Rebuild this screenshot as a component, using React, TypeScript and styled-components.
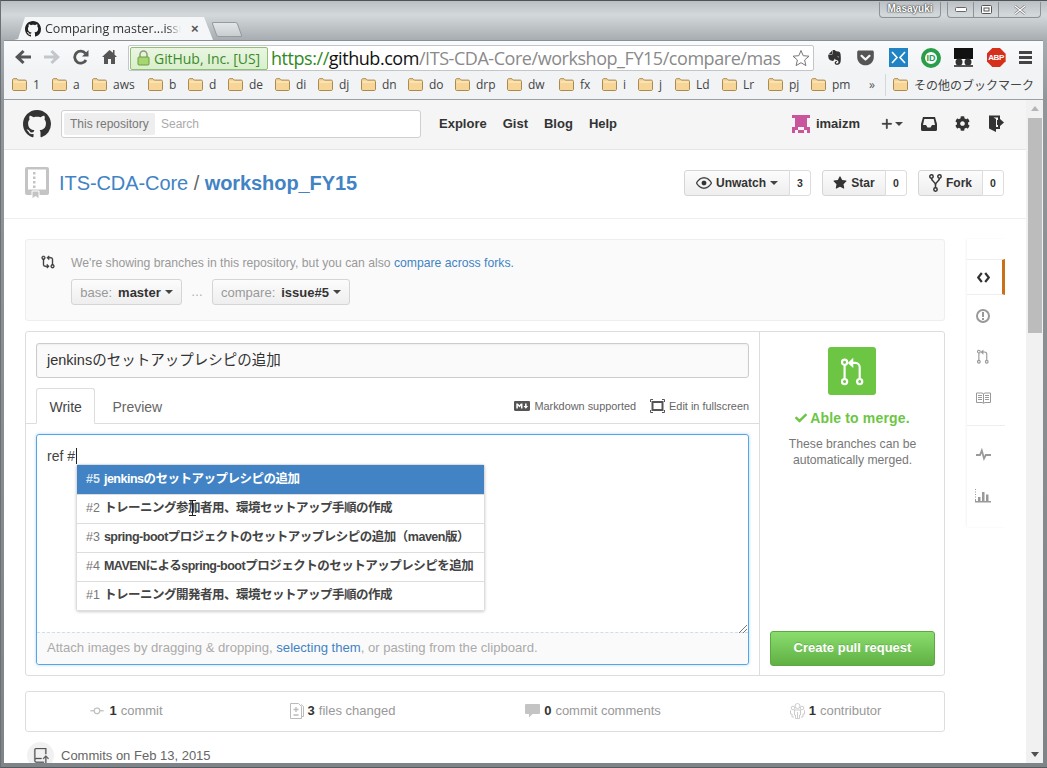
import React from "react";
import styled, { createGlobalStyle } from "styled-components";
import {
  GoEye,
  GoGitCommit,
  GoGitCompare,
  GoPlus,
  GoRepoPush,
  GoStarFill,
} from "react-icons/go";
import { FaCheck, FaCog, FaEvernote, FaGetPocket, FaMarkdown } from "react-icons/fa";

const UI = `"Open Sans", "Noto Sans CJK JP", sans-serif`;
const WEB = `"Liberation Sans", "Noto Sans CJK JP", sans-serif`;

const GlobalStyle = createGlobalStyle`
  html, body {
    margin: 0;
    padding: 0;
    width: 1047px;
    height: 768px;
    overflow: hidden;
    background: #4d5357;
  }
  * {
    box-sizing: border-box;
  }
`;

const Win = styled.div`
  width: 1047px;
  height: 768px;
  display: flex;
  flex-direction: column;
  padding: 0 4px 4px 3px;
  background: linear-gradient(#b9bfc3 0, #d3d8db 14px, #a6abaf 40px, #8f9599 100px, #7e8488 100%);
  border-top: 1px solid #4d5357;
  border-left: 1px solid #6a7074;
  border-bottom: 1px solid #555b60;
  font-family: ${WEB};
`;

const TitleBar = styled.div`
  height: 39px;
  flex: none;
  margin-left: 10px;
  display: flex;
  align-items: flex-start;
`;

const Tab = styled.div`
  width: 199px;
  height: 23px;
  margin-top: 16px;
  padding: 0 12px 0 11px;
  display: flex;
  align-items: center;
  gap: 4px;
  background: #f4f6f8;
  clip-path: polygon(0 100%, 4px 96%, 11px 0, 190px 0, 199px 100%);
  font: 12.5px ${UI};
  color: #333;
`;

const TabTitle = styled.span`
  width: 142px;
  flex: none;
  white-space: nowrap;
  -webkit-mask-image: linear-gradient(90deg, #000 122px, transparent 136px);
  mask-image: linear-gradient(90deg, #000 122px, transparent 136px);
`;

const TabClose = styled.span`
  font: bold 13px ${WEB};
  color: #555;
`;

const NewTab = styled.div`
  width: 26px;
  height: 15px;
  margin: 21px 0 0 1px;
  transform: skewX(20deg);
  border: 1px solid #969b9f;
  border-radius: 2px;
  background: linear-gradient(#e3e6e8, #c9cdd0);
`;

const TitleSpacer = styled.div`
  flex: 1;
`;

const UserBadge = styled.div`
  width: 62px;
  height: 16px;
  margin: 1px 6px 0 0;
  border: 1px solid #8d9296;
  border-top: none;
  border-radius: 0 0 4px 4px;
  text-align: center;
  font: bold 10px/14px ${WEB};
  color: #fff;
  text-shadow: 0 0 2px #222, 0 0 1px #222;
`;

const WinControls = styled.div`
  height: 16px;
  margin: 1px 2px 0 0;
  display: flex;
  border: 1px solid #8d9296;
  border-top: none;
  border-radius: 0 0 4px 4px;
  color: #fff;
`;

const WinButton = styled.div<{ $w: number }>`
  width: ${(p) => p.$w}px;
  display: flex;
  align-items: center;
  justify-content: center;
  & + & {
    border-left: 1px solid #8d9296;
  }
`;

const Toolbar = styled.div`
  height: 32px;
  flex: none;
  display: flex;
  align-items: center;
  background: linear-gradient(#f8fafb, #f1f3f5);
  border-top: 1px solid #8b9094;
  padding-left: 11px;
`;

const NavIcon = styled.span<{ $w: number }>`
  width: ${(p) => p.$w}px;
  flex: none;
  display: flex;
  align-items: center;
`;

const Omnibox = styled.div`
  width: 686px;
  height: 26px;
  flex: none;
  margin-top: 3px;
  padding: 0 3px 0 1px;
  display: flex;
  align-items: center;
  background: #fff;
  border: 1px solid #c3c6c9;
  border-radius: 2px;
`;

const SecureChip = styled.div`
  width: 138px;
  height: 23px;
  flex: none;
  display: flex;
  align-items: center;
  gap: 4px;
  padding-left: 6px;
  background: linear-gradient(#eaf6e2, #d9efcc);
  border: 1px solid #90bf75;
  border-radius: 2px;
  font: 14px ${UI};
  letter-spacing: -0.05px;
  color: #3c8a2e;
  white-space: nowrap;
`;

const Url = styled.div`
  flex: 1;
  padding-left: 3px;
  overflow: hidden;
  white-space: nowrap;
  font: 18px/24px ${UI};
  letter-spacing: -0.45px;
  color: #8a8a8a;
`;

const UrlScheme = styled.span`
  color: #2f8a22;
`;

const UrlHost = styled.span`
  color: #111;
`;

const Extensions = styled.div`
  flex: 1;
  display: flex;
  align-items: center;
  padding: 2px 11px 0 12px;
  justify-content: space-between;
`;

const Abp = styled.span`
  width: 19px;
  height: 19px;
  display: flex;
  align-items: center;
  justify-content: center;
  background: #d5301c;
  clip-path: polygon(30% 0, 70% 0, 100% 30%, 100% 70%, 70% 100%, 30% 100%, 0 70%, 0 30%);
  font: bold 8px ${WEB};
  letter-spacing: -0.3px;
  color: #fff;
`;

const IdBadge = styled.span`
  width: 20px;
  height: 20px;
  display: flex;
  align-items: center;
  justify-content: center;
  border-radius: 50%;
  background: #fff;
  border: 4px solid #2a9d4a;
  font: bold 9px ${WEB};
  color: #2a9d4a;
`;

const Bookmarks = styled.div`
  height: 28px;
  flex: none;
  display: flex;
  align-items: center;
  padding: 0 0 2px 8px;
  background: #f1f3f5;
  border-bottom: 1px solid #9a9fa3;
  font: 12px ${UI};
  color: #444;
`;

const Bookmark = styled.div<{ $w: number }>`
  width: ${(p) => p.$w}px;
  flex: none;
  display: flex;
  align-items: center;
  gap: 6px;
  white-space: nowrap;
`;

const Chevron = styled.span`
  width: 16px;
  margin-left: 11px;
  color: #555;
`;

const BarSep = styled.span`
  width: 1px;
  height: 22px;
  background: #d4d6d8;
  margin: 0 7px 0 0;
`;

const Page = styled.div`
  flex: 1;
  min-height: 0;
  display: flex;
  background: #fff;
`;

const Content = styled.div`
  width: 1022px;
  flex: none;
  overflow: hidden;
`;

const Scrollbar = styled.div`
  width: 17px;
  flex: none;
  padding-top: 18px;
  display: flex;
  flex-direction: column;
  align-items: center;
  position: relative;
  background: #f1f1f1;
`;

const ScrollThumb = styled.div`
  width: 14px;
  height: 215px;
  background: #bcbcbc;
`;

const Arrow = styled.span<{ $up?: boolean }>`
  position: absolute;
  left: 5px;
  width: 0;
  height: 0;
  border: 4px solid transparent;
  ${(p) =>
    p.$up
      ? "top: 6px; border-bottom: 5px solid #b5b5b5; border-top: none;"
      : "bottom: 6px; border-top: 5px solid #505050; border-bottom: none;"}
`;

const Header = styled.header`
  height: 50px;
  display: flex;
  align-items: center;
  padding: 0 22px 2px 19px;
  background: #f5f5f5;
  border-bottom: 1px solid #e5e5e5;
  color: #333;
`;

const Search = styled.div`
  width: 360px;
  height: 28px;
  margin: 0 18px 0 10px;
  padding: 2px;
  display: flex;
  align-items: stretch;
  background: #fff;
  border: 1px solid #cfcfcf;
  border-radius: 3px;
  font-size: 12px;
`;

const SearchScope = styled.span`
  width: 91px;
  padding-left: 6px;
  line-height: 22px;
  background: #eee;
  border-radius: 2px;
  color: #777;
`;

const SearchHint = styled.span`
  padding-left: 6px;
  line-height: 22px;
  color: #aaa;
`;

const NavLinks = styled.nav`
  flex: 1;
  display: flex;
  gap: 16px;
  font: bold 13px ${WEB};
  color: #333;
`;

const UserBox = styled.div`
  display: flex;
  align-items: center;
  font: bold 13px ${WEB};
`;

const HeaderIcon = styled.span<{ $left: number }>`
  display: flex;
  align-items: center;
  margin-left: ${(p) => p.$left}px;
`;

const RepoHead = styled.div`
  height: 69px;
  padding: 0 22px 2px 21px;
  display: flex;
  align-items: center;
  border-bottom: 1px solid #eee;
`;

const RepoTitle = styled.h1`
  flex: 1;
  margin: 0 0 0 10px;
  font: normal 20px ${WEB};
  letter-spacing: -0.07px;
  color: #4183c4;
`;

const Slash = styled.span`
  color: #666;
`;

const RepoName = styled.strong`
  font-weight: bold;
`;

const Actions = styled.div`
  display: flex;
  gap: 11px;
`;

const Action = styled.div`
  height: 26px;
  display: flex;
  font: bold 12px ${WEB};
  color: #333;
`;

const ActionButton = styled.div<{ $w: number }>`
  width: ${(p) => p.$w}px;
  display: flex;
  align-items: center;
  justify-content: center;
  gap: 4px;
  background: linear-gradient(#fcfcfc, #eee);
  border: 1px solid #d5d5d5;
  border-radius: 3px 0 0 3px;
`;

const Count = styled.div`
  width: 22px;
  margin-left: -1px;
  text-align: center;
  font-size: 10.5px;
  line-height: 24px;
  background: #fff;
  border: 1px solid #ddd;
  border-radius: 0 3px 3px 0;
`;

const Caret = styled.span`
  width: 0;
  height: 0;
  border: 4px solid transparent;
  border-top-color: #444;
  border-bottom: none;
`;

const Main = styled.div`
  padding: 20px 0 0 21px;
  display: flex;
  gap: 22px;
`;

const Column = styled.div`
  width: 920px;
  flex: none;
`;

const CompareBox = styled.div`
  height: 82px;
  padding: 15px 15px 0;
  display: flex;
  gap: 16px;
  background: #fafafa;
  border: 1px solid #eee;
  border-radius: 3px;
  color: #333;
`;

const CompareNote = styled.p`
  margin: 0 0 8px;
  font-size: 12.2px;
  line-height: 16px;
  color: #999;
`;

const Link = styled.span`
  color: #4183c4;
`;

const BranchRow = styled.div`
  display: flex;
  align-items: center;
`;

const BranchButton = styled.div<{ $w: number }>`
  width: ${(p) => p.$w}px;
  height: 26px;
  display: flex;
  align-items: center;
  justify-content: center;
  gap: 4px;
  background: linear-gradient(#fcfcfc, #eee);
  border: 1px solid #d5d5d5;
  border-radius: 3px;
  font: 13px ${WEB};
  color: #999;
`;

const BranchName = styled.b`
  margin-left: 2px;
  color: #333;
`;

const Dots = styled.span`
  width: 30px;
  text-align: center;
  font-size: 12px;
  color: #aaa;
`;

const FormBox = styled.div`
  height: 345px;
  margin-top: 10px;
  display: flex;
  border: 1px solid #ddd;
  border-radius: 3px;
`;

const Editor = styled.div`
  width: 734px;
  flex: none;
  padding-top: 11px;
  border-right: 1px solid #ddd;
`;

const TitleInput = styled.div`
  height: 35px;
  margin: 0 10px;
  padding-left: 10px;
  background: #fafafa;
  border: 1px solid #ccc;
  border-radius: 3px;
  box-shadow: inset 0 1px 2px rgba(0, 0, 0, 0.05);
  font-size: 14.5px;
  line-height: 33px;
  color: #333;
`;

const TabBar = styled.div`
  height: 36px;
  margin-top: 10px;
  padding: 0 10px;
  display: flex;
  align-items: flex-end;
  border-bottom: 1px solid #ddd;
  font-size: 14px;
`;

const EditorTab = styled.div<{ $active?: boolean }>`
  height: 36px;
  margin-bottom: -1px;
  padding: 0 ${(p) => (p.$active ? 12.5 : 16)}px;
  line-height: 37px;
  color: ${(p) => (p.$active ? "#444" : "#666")};
  background: ${(p) => (p.$active ? "#fff" : "transparent")};
  border: 1px solid ${(p) => (p.$active ? "#ddd" : "transparent")};
  border-bottom-color: ${(p) => (p.$active ? "#fff" : "transparent")};
  border-radius: 3px 3px 0 0;
`;

const TabTools = styled.div`
  flex: 1;
  height: 35px;
  display: flex;
  align-items: center;
  justify-content: flex-end;
  gap: 14px;
  font-size: 10.9px;
  color: #666;
`;

const ToolItem = styled.span`
  display: flex;
  align-items: center;
  gap: 4px;
  color: #666;
`;

const TextArea = styled.div`
  position: relative;
  height: 231px;
  margin: 10px 10px 0;
  display: flex;
  flex-direction: column;
  border: 1px solid #51a7e8;
  border-radius: 3px;
  box-shadow: 0 0 3px rgba(81, 167, 232, 0.5);
`;

const WriteArea = styled.div`
  flex: 1;
  padding: 12px 10px;
  font-size: 14px;
  line-height: 18px;
  color: #444;
`;

const Caretline = styled.span`
  display: inline-block;
  width: 1px;
  height: 16px;
  margin-left: 1px;
  vertical-align: -3px;
  background: #222;
`;

const Grip = styled.svg`
  position: absolute;
  right: 1px;
  top: 190px;
`;

const Suggester = styled.ul`
  position: absolute;
  left: 39px;
  top: 29px;
  width: 409px;
  margin: 0;
  padding: 0;
  list-style: none;
  background: #fff;
  border: 1px solid #ddd;
  border-radius: 3px;
  box-shadow: 0 1px 3px rgba(0, 0, 0, 0.2);
`;

const Suggestion = styled.li<{ $active?: boolean }>`
  height: 29px;
  padding: 0 9px 2px;
  display: flex;
  align-items: center;
  gap: 4px;
  white-space: nowrap;
  font: bold 12.5px/18px ${WEB};
  letter-spacing: -0.5px;
  color: ${(p) => (p.$active ? "#fff" : "#444")};
  background: ${(p) => (p.$active ? "#4183c4" : "#fff")};
  & + & {
    border-top: 1px solid #ddd;
  }
`;

const IssueNumber = styled.span<{ $active?: boolean }>`
  font-weight: ${(p) => (p.$active ? "bold" : "normal")};
  font-size: 12.5px;
  letter-spacing: 0;
  color: ${(p) => (p.$active ? "#d9e6f3" : "#777")};
`;

const IBeam = styled.svg`
  position: absolute;
  left: 151px;
  top: 65px;
`;

const DragBar = styled.div`
  height: 32px;
  flex: none;
  padding-left: 10px;
  background: #fafafa;
  border-top: 1px dashed #cfdfea;
  border-radius: 0 0 3px 3px;
  font-size: 13.1px;
  line-height: 29px;
  color: #aaa;
`;

const MergePanel = styled.div`
  flex: 1;
  padding: 15px 10px 9px;
  display: flex;
  flex-direction: column;
  align-items: center;
`;

const MergeBadge = styled.div`
  width: 48px;
  height: 48px;
  margin-right: 1px;
  display: flex;
  align-items: center;
  justify-content: center;
  background: #6cc644;
  border-radius: 3px;
  color: #fff;
`;

const MergeTitle = styled.div`
  margin-top: 14px;
  display: flex;
  align-items: center;
  gap: 3px;
  font: bold 14px/18px ${WEB};
  letter-spacing: 0.15px;
  color: #6cc644;
`;

const MergeNote = styled.p`
  flex: 1;
  margin: 9px 0 0;
  text-align: center;
  font-size: 12.2px;
  line-height: 16px;
  color: #777;
`;

const CreateButton = styled.div`
  width: 165px;
  height: 35px;
  text-align: center;
  font: bold 13px/31px ${WEB};
  color: #fff;
  text-shadow: 0 -1px 0 rgba(0, 0, 0, 0.15);
  background: linear-gradient(#8add6d, #60b044);
  border: 1px solid #5ca941;
  border-radius: 3px;
`;

const Stats = styled.div`
  height: 41px;
  margin-top: 15px;
  padding-bottom: 2px;
  display: grid;
  grid-template-columns: 200px 233px 268px 217px;
  border: 1px solid #ddd;
  border-radius: 3px;
  font-size: 13px;
  color: #999;
`;

const Stat = styled.div`
  display: flex;
  align-items: center;
  justify-content: center;
  gap: 4px;
`;

const StatNumber = styled.b`
  color: #333;
`;

const CommitDay = styled.div`
  margin: 10px 0 0 2px;
  display: flex;
  align-items: center;
  gap: 7px;
  font-size: 13px;
  color: #666;
`;

const DayIcon = styled.span`
  width: 27px;
  height: 27px;
  display: flex;
  align-items: center;
  justify-content: center;
  background: #f1f1f1;
  border-radius: 50%;
  color: #555;
`;

const Side = styled.nav`
  width: 38px;
  flex: none;
  height: 288px;
  padding-top: 20px;
  box-shadow: -1px 0 2px rgba(0, 0, 0, 0.05);
  color: #999;
`;

const SideItem = styled.div<{ $active?: boolean }>`
  height: ${(p) => (p.$active ? 36 : 41)}px;
  padding-right: 3px;
  display: flex;
  align-items: center;
  justify-content: center;
  color: ${(p) => (p.$active ? "#333" : "#999")};
  border-right: 3px solid ${(p) => (p.$active ? "#c9701a" : "transparent")};
  border-top: 1px solid ${(p) => (p.$active ? "#eee" : "transparent")};
  border-bottom: 1px solid ${(p) => (p.$active ? "#eee" : "transparent")};
`;

const SideRule = styled.div`
  margin: 7px 0 8px;
  height: 1px;
  background: #eee;
`;

const GITHUB_MARK =
  "M8 0C3.58 0 0 3.58 0 8c0 3.54 2.29 6.53 5.47 7.59.4.07.55-.17.55-.38 0-.19-.01-.82-.01-1.49-2.01.37-2.53-.49-2.69-.94-.09-.23-.48-.94-.82-1.13-.28-.15-.68-.52-.01-.53.63-.01 1.08.58 1.23.82.72 1.21 1.87.87 2.33.66.07-.52.28-.87.51-1.07-1.78-.2-3.64-.89-3.64-3.95 0-.87.31-1.59.82-2.15-.08-.2-.36-1.02.08-2.12 0 0 .67-.21 2.2.82.64-.18 1.32-.27 2-.27.68 0 1.36.09 2 .27 1.53-1.04 2.2-.82 2.2-.82.44 1.1.16 1.92.08 2.12.51.56.82 1.27.82 2.15 0 3.07-1.87 3.75-3.65 3.95.29.25.54.73.54 1.48 0 1.07-.01 1.93-.01 2.2 0 .21.15.46.55.38A8.013 8.013 0 0016 8c0-4.42-3.58-8-8-8z";

function GithubMark({ size, color }: { size: number; color: string }) {
  return (
    <svg width={size} height={size} viewBox="0 0 16 16" fill={color}>
      <path d={GITHUB_MARK} />
    </svg>
  );
}

function Folder() {
  return (
    <svg width="15" height="13" viewBox="0 0 15 13">
      <path
        d="M.5 2.2C.5 1.2 1 .7 2 .7h3l1.3 1.4H13c1 0 1.5.5 1.5 1.4v7.6c0 1-.5 1.4-1.5 1.4H2c-1 0-1.5-.4-1.5-1.4z"
        fill="#f7d597"
        stroke="#a98b52"
      />
      <path d="M1.5 4h12" stroke="#fdf0d0" />
    </svg>
  );
}

function BackArrow({ color }: { color: string }) {
  return (
    <svg width="16" height="14" viewBox="0 0 16 14" fill={color}>
      <path d="M7.5 0 9.6 2 6 5.4h10v3.2H6L9.6 12l-2.1 2L0 7z" />
    </svg>
  );
}

function ForwardArrow({ color }: { color: string }) {
  return (
    <svg width="16" height="14" viewBox="0 0 16 14" fill={color}>
      <path d="M8.5 0 6.4 2 10 5.4H0v3.2h10L6.4 12l2.1 2L16 7z" />
    </svg>
  );
}

function Reload() {
  return (
    <svg width="16" height="16" viewBox="0 0 16 16" fill="none">
      <path d="M13 11a6 6 0 1 1-.6-6.6" stroke="#555" strokeWidth="2.8" />
      <path d="M15.5 1v6.5H9z" fill="#555" />
    </svg>
  );
}

function HomeIcon() {
  return (
    <svg width="15" height="15" viewBox="0 0 15 15" fill="#555">
      <path d="M7.5 1 0 8h2v7h4v-5h3v5h4V8h2l-2.5-2.4V1H11v2.8z" />
    </svg>
  );
}

function Lock() {
  return (
    <svg width="13" height="16" viewBox="0 0 13 16">
      <path d="M3 7V4.500a3.500 3.500 0 0 1 7 0V7" fill="none" stroke="#8c9a7c" strokeWidth="1.500" />
      <rect x="1" y="7" width="11" height="8" rx="1" fill="#a5d66f" stroke="#6e9e42" />
    </svg>
  );
}

function StarOutline() {
  return (
    <svg width="18" height="18" viewBox="0 0 18 18" fill="#fff" stroke="#777">
      <path d="M9 1.500 11.200 6.700 17 7.200 12.600 11 13.900 16.600 9 13.700 4.100 16.600 5.400 11 1 7.200 6.800 6.700z" />
    </svg>
  );
}

function Xmarks() {
  return (
    <svg width="19" height="19" viewBox="0 0 19 19">
      <rect width="19" height="19" fill="#1f83c4" />
      <path d="M3 4l5 5.500L3 15M16 4l-5 5.500 5 5.500" fill="none" stroke="#fff" strokeWidth="1.600" />
    </svg>
  );
}

function Glasses() {
  return (
    <svg width="19" height="19" viewBox="0 0 19 19">
      <rect width="19" height="19" fill="#fff" />
      <rect width="19" height="11" fill="#111" />
      <rect y="17" width="19" height="2" fill="#555" />
      <circle cx="5" cy="14" r="3.500" fill="#333" />
      <circle cx="14" cy="14" r="3.500" fill="#333" />
    </svg>
  );
}

function Hamburger() {
  return (
    <svg width="13" height="13" viewBox="0 0 13 13" fill="#444">
      <rect width="13" height="3" />
      <rect y="5" width="13" height="3" />
      <rect y="10" width="13" height="3" />
    </svg>
  );
}

function Invader() {
  return (
    <svg width="18" height="18" viewBox="0 0 6 6" fill="#c9559c" shapeRendering="crispEdges">
      <rect width="6" height="1" />
      <rect x="1" y="1" width="4" height="1" />
      <rect x="1" y="2" width="4" height="2" />
      <rect y="4" width="2" height="1" x="0" />
      <rect y="4" width="2" height="1" x="4" />
      <rect x="0" y="5" width="1" height="1" />
      <rect x="2" y="5" width="2" height="1" />
      <rect x="5" y="5" width="1" height="1" />
    </svg>
  );
}

function InboxIcon() {
  return (
    <svg width="16" height="14" viewBox="0 0 16 14" fill="#333">
      <path
        fillRule="evenodd"
        d="M2 0h12l2 7v5.500A1.500 1.500 0 0 1 14.500 14h-13A1.500 1.500 0 0 1 0 12.500V7zM3.300 2 2 8h3l1.500 2.500h3L11 8h3l-1.300-6z"
      />
    </svg>
  );
}

function SignOutIcon() {
  return (
    <svg width="15" height="17" viewBox="0 0 15 17" fill="#333">
      <path d="M0 0.500h11v4.500H9V2.500H4.500L7 4v8h2V10h2v4H7v3l-7-3.500z" />
      <path d="M10.500 5V3.500L15 7.500l-4.500 4V10H8V5z" />
    </svg>
  );
}

function ForkIcon() {
  return (
    <svg width="13" height="18" viewBox="0 0 13 18" fill="none" stroke="#333" strokeWidth="1.500">
      <circle cx="2.500" cy="2.500" r="1.700" />
      <circle cx="10.500" cy="2.500" r="1.700" />
      <circle cx="6.500" cy="15.500" r="1.700" />
      <path d="M2.500 4.200C2.500 7.500 6.500 7.500 6.500 11v2.800M10.500 4.200C10.500 7.500 6.500 7.500 6.500 11" />
    </svg>
  );
}

function RepoBook({ width, height, color }: { width: number; height: number; color: string }) {
  return (
    <svg width={width} height={height} viewBox="0 0 24 32">
      <path d="M2 0h20a2 2 0 0 1 2 2v24a2 2 0 0 1-2 2H2a2 2 0 0 1-2-2V2a2 2 0 0 1 2-2z" fill={color} />
      <rect x="3" y="2.500" width="18" height="20" fill="#fff" />
      <rect x="8" y="5" width="2.500" height="2.500" fill={color} />
      <rect x="8" y="9.500" width="2.500" height="2.500" fill={color} />
      <rect x="8" y="14" width="2.500" height="2.500" fill={color} />
      <rect x="8" y="18.500" width="2.500" height="2.500" fill={color} />
      <path d="M7 24h7v8l-3.500-2.500L7 32z" fill={color} stroke="#fff" />
    </svg>
  );
}

function CodeIcon() {
  return (
    <svg width="13" height="11" viewBox="0 0 13 11" fill="none" stroke="currentColor" strokeWidth="2.200">
      <path d="M4.800 1 1.200 5.500l3.600 4.500M8.200 1l3.600 4.500L8.200 10" />
    </svg>
  );
}

function IssueIcon() {
  return (
    <svg width="14" height="14" viewBox="0 0 14 14">
      <circle cx="7" cy="7" r="6" fill="none" stroke="currentColor" strokeWidth="2" />
      <rect x="6" y="3" width="2" height="5" fill="currentColor" />
      <rect x="6" y="9" width="2" height="2" fill="currentColor" />
    </svg>
  );
}

function PullRequestIcon({ width, height }: { width: number; height: number }) {
  return (
    <svg width={width} height={height} viewBox="0 0 16 20" fill="none" stroke="currentColor" strokeWidth="1.500">
      <circle cx="2.500" cy="3.500" r="1.800" />
      <circle cx="2.500" cy="17" r="1.800" />
      <circle cx="13" cy="17" r="1.800" />
      <path d="M2.500 5.300v9.900M13 15.200V7a3 3 0 0 0-3-3H8" />
      <path d="M8.500.5v7L4.700 4z" fill="currentColor" stroke="none" />
    </svg>
  );
}

function BookIcon() {
  return (
    <svg width="15" height="12" viewBox="0 0 15 12" fill="none" stroke="currentColor">
      <path d="M.5 1h5.500l1.500.8L9 1h5.500v9.500H9l-1.500.8-1.500-.8H.5zM7.500 1.800v9" />
      <path d="M2 3.500h4M2 5.500h4M2 7.500h4M9 3.500h4M9 5.500h4M9 7.500h4" />
    </svg>
  );
}

function PulseIcon() {
  return (
    <svg width="15" height="13" viewBox="0 0 15 13" fill="none" stroke="currentColor" strokeWidth="1.800">
      <path d="M0 7h4l1.800-4.500L8 10.500l1.800-3.500H15" />
    </svg>
  );
}

function GraphIcon() {
  return (
    <svg width="16" height="16" viewBox="0 0 16 16" fill="currentColor">
      <path d="M.5 1v1M.5 3.500v1M.5 6v1M.5 8.500v1M.5 11v1" stroke="currentColor" />
      <rect y="13" width="16" height="1.500" />
      <rect x="0" y="12" width="1" height="2" />
      <rect x="3" y="9" width="2.500" height="4" />
      <rect x="7" y="4" width="2.500" height="9" />
      <rect x="11" y="6.500" width="2.500" height="6.500" />
    </svg>
  );
}

function ScreenFullIcon() {
  return (
    <svg width="15" height="14" viewBox="0 0 15 14" fill="none" stroke="#555">
      <rect x="2.500" y="3" width="10" height="8" strokeWidth="2" />
      <path d="M.5 3V.5H3M12 .5h2.500V3M14.500 11v2.500H12M3 13.500H.5V11" />
    </svg>
  );
}

function DiffFileIcon() {
  return (
    <svg width="14" height="16" viewBox="0 0 14 16" fill="none" stroke="#bbb">
      <path d="M.5.5h8l3 3v12H.5z" />
      <path d="M11 1.500l2.500 2v10H12" />
      <path d="M6 4v5M3.500 6.500h5M3.500 12h5" strokeWidth="1.300" />
    </svg>
  );
}

function CommentIcon() {
  return (
    <svg width="15" height="15" viewBox="0 0 15 15" fill="#c4c4c4">
      <path d="M1 1h13a1 1 0 0 1 1 1v8a1 1 0 0 1-1 1H7.500L4 14.500V11H1a1 1 0 0 1-1-1V2a1 1 0 0 1 1-1z" />
    </svg>
  );
}

function PeopleIcon() {
  return (
    <svg width="15" height="16" viewBox="0 0 15 16" fill="none" stroke="#ccc">
      <circle cx="7.500" cy="3" r="2.500" />
      <circle cx="3" cy="5" r="1.800" />
      <circle cx="12" cy="5" r="1.800" />
      <path d="M4.500 7h6v5h-1v3.500h-4V12h-1zM1 7.500H.5V11H2V14h2M14 7.500h.5V11H13V14h-2M7.500 9v6" />
    </svg>
  );
}

const BOOKMARKS: [string, number][] = [
  ["1", 40],
  ["a", 40],
  ["aws", 56],
  ["b", 40],
  ["d", 40],
  ["de", 47],
  ["di", 43],
  ["dj", 43],
  ["dn", 47],
  ["do", 47],
  ["drp", 52],
  ["dw", 52],
  ["fx", 43],
  ["i", 36],
  ["j", 37],
  ["Ld", 47],
  ["Lr", 46],
  ["pj", 43],
  ["pm", 47],
];

const ISSUES = [
  { n: "#5", title: "jenkinsのセットアップレシピの追加" },
  { n: "#2", title: "トレーニング参加者用、環境セットアップ手順の作成" },
  { n: "#3", title: "spring-bootプロジェクトのセットアップレシピの追加（maven版）" },
  { n: "#4", title: "MAVENによるspring-bootプロジェクトのセットアップレシピを追加" },
  { n: "#1", title: "トレーニング開発者用、環境セットアップ手順の作成" },
];

export default function App() {
  return (
    <Win>
      <GlobalStyle />
      <TitleBar>
        <Tab>
          <GithubMark size={16} color="#222" />
          <TabTitle>Comparing master...issu</TabTitle>
          <TabClose>×</TabClose>
        </Tab>
        <NewTab />
        <TitleSpacer />
        <UserBadge>Masayuki</UserBadge>
        <WinControls>
          <WinButton $w={25}>
            <svg width="12" height="5" viewBox="0 0 12 5" fill="none" stroke="#666">
              <rect x="0.500" y="0.500" width="11" height="4" rx="1" fill="#fff" />
            </svg>
          </WinButton>
          <WinButton $w={25}>
            <svg width="11" height="9" viewBox="0 0 11 9" fill="none" stroke="#555">
              <rect x="0.500" y="0.500" width="10" height="8" rx="1" fill="#fff" />
              <rect x="3" y="3" width="5" height="3" />
            </svg>
          </WinButton>
          <WinButton $w={42}>
            <svg width="12" height="10" viewBox="0 0 12 10" fill="none">
              <path d="M1 1l10 8M11 1 1 9" stroke="#777" strokeWidth="2.400" />
              <path d="M1 1l10 8M11 1 1 9" stroke="#fff" strokeWidth="1.200" />
            </svg>
          </WinButton>
        </WinControls>
      </TitleBar>

      <Toolbar>
        <NavIcon $w={29}>
          <BackArrow color="#555" />
        </NavIcon>
        <NavIcon $w={29}>
          <ForwardArrow color="#c4c7ca" />
        </NavIcon>
        <NavIcon $w={29}>
          <Reload />
        </NavIcon>
        <NavIcon $w={26}>
          <HomeIcon />
        </NavIcon>
        <Omnibox>
          <SecureChip>
            <Lock />
            GitHub, Inc. [US]
          </SecureChip>
          <Url>
            <UrlScheme>https://</UrlScheme>
            <UrlHost>github.com</UrlHost>/ITS-CDA-Core/workshop_FY15/compare/mas
          </Url>
          <StarOutline />
        </Omnibox>
        <Extensions>
          <FaEvernote size={17} color="#333" />
          <FaGetPocket size={19} color="#555" />
          <Xmarks />
          <IdBadge>ID</IdBadge>
          <Glasses />
          <Abp>ABP</Abp>
          <Hamburger />
        </Extensions>
      </Toolbar>

      <Bookmarks>
        {BOOKMARKS.map(([label, width]) => (
          <Bookmark key={label} $w={width}>
            <Folder />
            {label}
          </Bookmark>
        ))}
        <Chevron>»</Chevron>
        <BarSep />
        <Bookmark $w={142}>
          <Folder />
          その他のブックマーク
        </Bookmark>
      </Bookmarks>

      <Page>
        <Content>
          <Header>
            <GithubMark size={28} color="#333" />
            <Search>
              <SearchScope>This repository</SearchScope>
              <SearchHint>Search</SearchHint>
            </Search>
            <NavLinks>
              <span>Explore</span>
              <span>Gist</span>
              <span>Blog</span>
              <span>Help</span>
            </NavLinks>
            <UserBox>
              <Invader />
              <HeaderIcon $left={6}>imaizm</HeaderIcon>
              <HeaderIcon $left={19}>
                <GoPlus size={16} strokeWidth={1} />
                <Caret />
              </HeaderIcon>
              <HeaderIcon $left={18}>
                <InboxIcon />
              </HeaderIcon>
              <HeaderIcon $left={18}>
                <FaCog size={15} />
              </HeaderIcon>
              <HeaderIcon $left={19}>
                <SignOutIcon />
              </HeaderIcon>
            </UserBox>
          </Header>

          <RepoHead>
            <RepoBook width={24} height={32} color="#c4c4c4" />
            <RepoTitle>
              ITS-CDA-Core <Slash>/</Slash> <RepoName>workshop_FY15</RepoName>
            </RepoTitle>
            <Actions>
              <Action>
                <ActionButton $w={106}>
                  <GoEye size={16} strokeWidth={0.4} />
                  Unwatch
                  <Caret />
                </ActionButton>
                <Count>3</Count>
              </Action>
              <Action>
                <ActionButton $w={64}>
                  <GoStarFill size={14} />
                  Star
                </ActionButton>
                <Count>0</Count>
              </Action>
              <Action>
                <ActionButton $w={65}>
                  <ForkIcon />
                  Fork
                </ActionButton>
                <Count>0</Count>
              </Action>
            </Actions>
          </RepoHead>

          <Main>
            <Column>
              <CompareBox>
                <GoGitCompare size={14} strokeWidth={0.7} />
                <div>
                  <CompareNote>
                    We're showing branches in this repository, but you can also{" "}
                    <Link>compare across forks.</Link>
                  </CompareNote>
                  <BranchRow>
                    <BranchButton $w={111}>
                      base: <BranchName>master</BranchName>
                      <Caret />
                    </BranchButton>
                    <Dots>…</Dots>
                    <BranchButton $w={138}>
                      compare: <BranchName>issue#5</BranchName>
                      <Caret />
                    </BranchButton>
                  </BranchRow>
                </div>
              </CompareBox>

              <FormBox>
                <Editor>
                  <TitleInput>jenkinsのセットアップレシピの追加</TitleInput>
                  <TabBar>
                    <EditorTab $active>Write</EditorTab>
                    <EditorTab>Preview</EditorTab>
                    <TabTools>
                      <ToolItem>
                        <FaMarkdown size={16} color="#555" />
                        Markdown supported
                      </ToolItem>
                      <ToolItem>
                        <ScreenFullIcon />
                        Edit in fullscreen
                      </ToolItem>
                    </TabTools>
                  </TabBar>
                  <TextArea>
                    <WriteArea>
                      ref #
                      <Caretline />
                    </WriteArea>
                    <Suggester>
                      {ISSUES.map((issue, i) => (
                        <Suggestion key={issue.n} $active={i === 0}>
                          <IssueNumber $active={i === 0}>{issue.n}</IssueNumber>
                          {issue.title}
                        </Suggestion>
                      ))}
                    </Suggester>
                    <IBeam width="9" height="16" viewBox="0 0 9 16" fill="none" stroke="#222">
                      <path d="M1 .5h7M1 15.500h7M4.500 0v16" />
                    </IBeam>
                    <Grip width="8" height="8" viewBox="0 0 8 8" stroke="#777" fill="none">
                      <path d="M0 8 8 0M4 8l4-4" />
                    </Grip>
                    <DragBar>
                      Attach images by dragging &amp; dropping, <Link>selecting them</Link>, or pasting from the
                      clipboard.
                    </DragBar>
                  </TextArea>
                </Editor>
                <MergePanel>
                  <MergeBadge>
                    <PullRequestIcon width={23} height={29} />
                  </MergeBadge>
                  <MergeTitle>
                    <FaCheck size={12} />
                    Able to merge.
                  </MergeTitle>
                  <MergeNote>
                    These branches can be
                    <br />
                    automatically merged.
                  </MergeNote>
                  <CreateButton>Create pull request</CreateButton>
                </MergePanel>
              </FormBox>

              <Stats>
                <Stat>
                  <GoGitCommit size={16} color="#bbb" strokeWidth={0.3} />
                  <StatNumber>1</StatNumber> commit
                </Stat>
                <Stat>
                  <DiffFileIcon />
                  <StatNumber>3</StatNumber> files changed
                </Stat>
                <Stat>
                  <CommentIcon />
                  <StatNumber>0</StatNumber> commit comments
                </Stat>
                <Stat>
                  <PeopleIcon />
                  <StatNumber>1</StatNumber> contributor
                </Stat>
              </Stats>

              <CommitDay>
                <DayIcon>
                  <GoRepoPush size={16} strokeWidth={0.5} />
                </DayIcon>
                Commits on Feb 13, 2015
              </CommitDay>
            </Column>

            <Side>
              <SideItem $active>
                <CodeIcon />
              </SideItem>
              <SideItem>
                <IssueIcon />
              </SideItem>
              <SideItem>
                <PullRequestIcon width={12} height={15} />
              </SideItem>
              <SideItem>
                <BookIcon />
              </SideItem>
              <SideRule />
              <SideItem>
                <PulseIcon />
              </SideItem>
              <SideItem>
                <GraphIcon />
              </SideItem>
            </Side>
          </Main>
        </Content>
        <Scrollbar>
          <Arrow $up />
          <ScrollThumb />
          <Arrow />
        </Scrollbar>
      </Page>
    </Win>
  );
}
